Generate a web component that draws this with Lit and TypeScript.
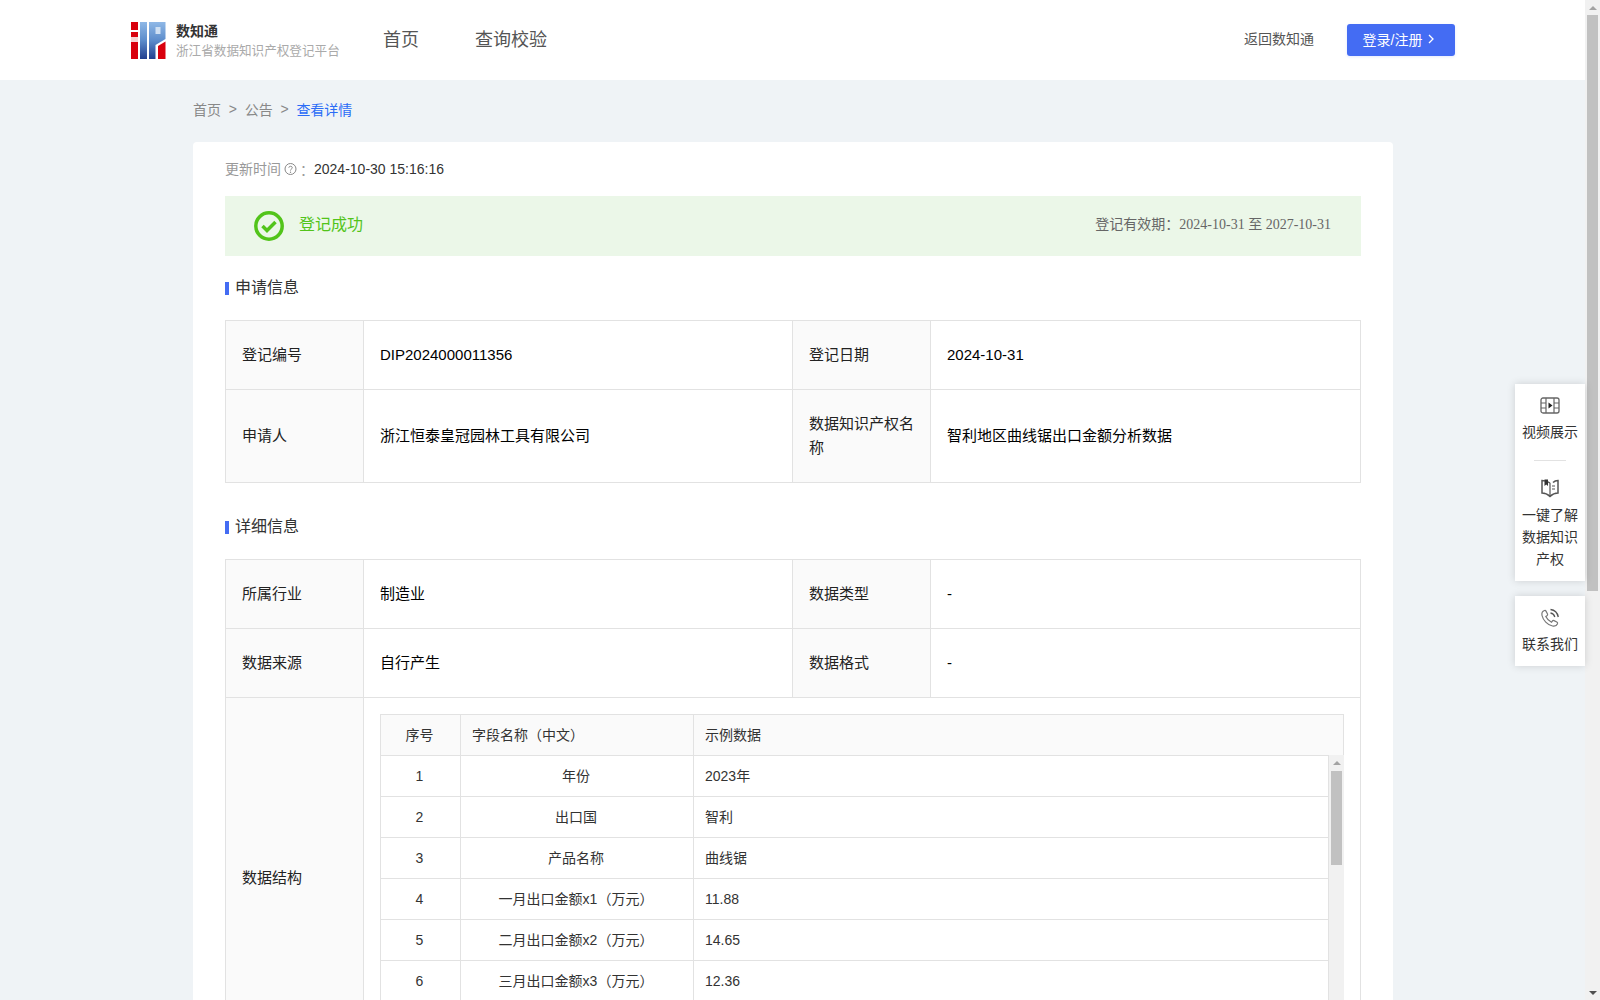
import { LitElement, html, css, svg } from 'lit';
import { customElement } from 'lit/decorators.js';

const basicRows = [
  ['1', '年份', '2023年'],
  ['2', '出口国', '智利'],
  ['3', '产品名称', '曲线锯'],
  ['4', '一月出口金额x1（万元）', '11.88'],
  ['5', '二月出口金额x2（万元）', '14.65'],
  ['6', '三月出口金额x3（万元）', '12.36'],
];

const logo = html`<svg class="logo" width="35" height="37" viewBox="0 0 35 37">
  <defs>
    <linearGradient id="lb" x1="0" y1="0" x2="0" y2="1">
      <stop offset="0" stop-color="#8fb8e6" />
      <stop offset="0.5" stop-color="#5c8ccb" />
      <stop offset="1" stop-color="#223f8f" />
    </linearGradient>
  </defs>
  <rect x="0" y="0" width="7" height="8" fill="#d9000d" />
  <rect x="0" y="10" width="7" height="5" fill="#d9000d" />
  <rect x="0" y="15" width="7" height="5" fill="#f6d5d5" />
  <rect x="0" y="20" width="7" height="17" fill="#d9000d" />
  <rect x="9" y="0" width="7" height="37" fill="url(#lb)" />
  <path d="M18 0H34.500V17L24.500 23V37H18Z" fill="url(#lb)" />
  <rect x="24.500" y="5" width="5" height="7" fill="#cfe0f3" />
  <path d="M27 24L34.500 19.500V37H27Z" fill="#d9000d" />
</svg>`;

const filmIcon = svg`<rect x="1" y="2" width="18" height="15" rx="2" fill="none" stroke="#666" stroke-width="1.300" />
  <path d="M6 2V17M14 2V17M1 7H6M1 12H6M14 7H19M14 12H19" fill="none" stroke="#666" stroke-width="1.200" />
  <path d="M8.500 6.500L12.500 9.500L8.500 12.500Z" fill="#222" />`;

const bookIcon = svg`<path d="M10 5C8 3.500 5 2.500 2 2.500V15C5 15 8 16.500 10 18.500C12 16.500 15 15 18 15V2.500C15.500 2.500 14 3.500 13 4.500" fill="none" stroke="#555" stroke-width="1.500" />
  <path d="M4.500 1.500H8V8L6.200 6.500L4.500 8Z" fill="#333" />
  <path d="M10 5V18.500M12 8H15M12 11H15" fill="none" stroke="#555" stroke-width="1.200" />`;

const phoneIcon = svg`<path d="M4.500 2.500C2.500 3.200 1.500 5 2 7.500C3 12 7.500 17 12.500 18C15 18.500 16.800 17.500 17.500 15.800C17.800 15 17.500 14.400 16.800 14L14 12.600C13.300 12.300 12.700 12.500 12.300 13.100L11.500 14.300C9 13 7 11 5.800 8.500L7 7.700C7.600 7.300 7.800 6.700 7.500 6L6 3.100C5.700 2.500 5.100 2.300 4.500 2.500Z" fill="none" stroke="#777" stroke-width="1.200" />
  <path d="M10.500 1.500C14.500 2 17.500 5 18.300 9M10.500 5C12.500 5.300 14.300 7 14.800 9" fill="none" stroke="#555" stroke-width="1.300" />`;

@customElement('app-root')
export class AppRoot extends LitElement {
  static styles = css`
    :host {
      display: flex;
      position: relative;
      height: 1000px;
      overflow: hidden;
      background: #eff3f6;
      font-family: 'Liberation Sans', 'Noto Sans CJK SC', sans-serif;
      font-size: 14px;
      color: #333;
    }

    .page {
      flex: 1;
      min-width: 0;
    }

    /* page scrollbar */
    .bar {
      width: 15px;
      flex: none;
      background: #f1f1f1;
      display: flex;
      flex-direction: column;
      align-items: center;
      position: relative;
    }
    .bar .arrow-box {
      height: 15px;
      flex: none;
      display: flex;
      align-items: center;
      justify-content: center;
    }
    .bar .thumb {
      width: 11px;
      height: 576px;
      background: #c1c1c1;
    }
    .bar .spacer {
      flex: 1;
    }
    .up {
      width: 0;
      height: 0;
      border-left: 4px solid transparent;
      border-right: 4px solid transparent;
      border-bottom: 4px solid #a3a3a3;
    }
    .down {
      width: 0;
      height: 0;
      border-left: 4px solid transparent;
      border-right: 4px solid transparent;
      border-top: 4px solid #505050;
    }

    header {
      height: 80px;
      background: #fff;
      display: flex;
      align-items: center;
      padding: 0 130px 0 131px;
    }
    .logo {
      display: block;
      margin-right: 10px;
    }
    .brand {
      width: 168px;
      margin-right: 39px;
    }
    .brand .name {
      font-size: 14px;
      font-weight: 700;
      line-height: 20px;
      color: #333;
    }
    .brand .sub {
      font-size: 12.600px;
      line-height: 18px;
      margin-top: 1px;
      color: #aaa;
      white-space: nowrap;
    }
    nav {
      display: flex;
      gap: 56px;
      font-size: 18px;
      color: #555;
      padding-bottom: 4px;
    }
    .head-right {
      margin-left: auto;
      display: flex;
      align-items: center;
      gap: 33px;
      color: #555;
    }
    .head-right .back {
      padding-bottom: 4px;
    }
    .login {
      width: 108px;
      height: 32px;
      box-sizing: border-box;
      padding: 0 4px 3px 0;
      background: #446cf3;
      color: #fff;
      border-radius: 3px;
      display: flex;
      align-items: center;
      justify-content: center;
      gap: 5px;
      box-shadow: 0 1px 3px rgba(68, 108, 243, 0.15);
    }

    .content {
      width: 1200px;
      margin-left: 193px;
    }
    .crumbs {
      height: 62px;
      box-sizing: border-box;
      padding-bottom: 5px;
      display: flex;
      align-items: center;
      color: #888;
      gap: 7.750px;
    }
    .crumbs .cur {
      color: #2b6cf6;
    }

    .card {
      background: #fff;
      border-radius: 4px 4px 0 0;
      padding: 0 32px 40px;
      box-sizing: border-box;
    }
    .updated {
      height: 54px;
      display: flex;
      align-items: center;
      color: #999;
    }
    .updated .key {
      padding-bottom: 2px;
    }
    .updated .time {
      color: #333;
    }
    .updated svg {
      margin: 0 2px 0 2px;
    }

    .alert {
      height: 60px;
      background: #ebf7e8;
      display: flex;
      align-items: center;
      padding: 0 30px 0 29px;
    }
    .alert .ok {
      font-size: 16px;
      color: #52c41a;
      margin-left: 15px;
      padding-bottom: 6px;
    }
    .alert .valid {
      margin-left: auto;
      color: #666;
      padding-bottom: 6px;
    }
    .alert .valid .date {
      font-family: 'Liberation Serif', 'Noto Sans CJK SC', serif;
    }

    .section {
      display: flex;
      align-items: center;
      gap: 6px;
      height: 20px;
      padding-bottom: 2px;
      font-size: 16px;
      color: #333;
      margin: 20px 0 22px;
    }
    .section::before {
      content: '';
      width: 4px;
      height: 13px;
      background: #446cf3;
      margin-top: 4px;
    }
    .section.second {
      margin-top: 32px;
    }

    table {
      border-collapse: collapse;
      table-layout: fixed;
      width: 100%;
    }
    .info > tr > td,
    .info > tbody > tr > td {
      border: 1px solid #e2e2e2;
      padding: 0 15px 0 16px;
      height: 68px;
      font-size: 15px;
      color: #000;
      line-height: 24px;
    }
    .info td.label {
      background: #fafafa;
      color: #222;
    }
    .info tr.tall > td {
      height: 92px;
    }
    .info td.nested {
      padding: 16px 16px 16px;
      vertical-align: top;
    }

    .grid-head td,
    .grid-body td {
      border: 1px solid #e2e2e2;
      height: 39px;
      padding: 0 13px 1px 11px;
      font-size: 14px;
      color: #333;
      line-height: 20px;
    }
    .grid-head td {
      background: #fafafa;
    }
    .grid-head td.c,
    .grid-body td.c {
      text-align: center;
    }
    .grid-head table,
    .grid-body table {
      width: 100%;
    }
    .grid-wrap {
      display: flex;
      align-items: flex-start;
      height: 287px;
      overflow: hidden;
    }
    .grid-body {
      flex: 1;
      min-width: 0;
    }
    .grid-head {
      margin-bottom: -1px;
    }
    .inner-bar {
      width: 15px;
      height: 287px;
      flex: none;
      background: #f1f1f1;
      display: flex;
      flex-direction: column;
      align-items: center;
    }
    .inner-bar .arrow-box {
      height: 16px;
      flex: none;
      display: flex;
      align-items: center;
      justify-content: center;
    }
    .inner-bar .thumb {
      width: 11px;
      height: 94px;
      background: #c1c1c1;
    }

    .tools {
      position: absolute;
      right: 15px;
      top: 384px;
      width: 70px;
      display: flex;
      flex-direction: column;
      gap: 15px;
    }
    .tool-card {
      background: #fff;
      box-shadow: 0 0 8px rgba(0, 0, 0, 0.15);
      text-align: center;
      color: #333;
      line-height: 22px;
      padding: 12px 0 11px;
    }
    .tool-card svg {
      display: block;
      margin: 0 auto 5px;
    }
    .tool-card svg.book {
      margin-bottom: 6px;
    }
    .tool-card .divider {
      width: 32px;
      height: 1px;
      background: #e2e2e2;
      margin: 17px auto 17px;
    }
    .tool-card .txt {
      padding: 0 5px;
    }
  `;

  render() {
    return html`
      <div class="page">
        <header>
          ${logo}
          <div class="brand">
            <div class="name">数知通</div>
            <div class="sub">浙江省数据知识产权登记平台</div>
          </div>
          <nav><span>首页</span><span>查询校验</span></nav>
          <div class="head-right">
            <span class="back">返回数知通</span>
            <div class="login">
              登录/注册
              <svg width="8" height="12" viewBox="0 0 8 12">
                <path d="M2 2L6 6L2 10" fill="none" stroke="#fff" stroke-width="1.300" />
              </svg>
            </div>
          </div>
        </header>

        <div class="content">
          <div class="crumbs">
            <span>首页</span><span>&gt;</span><span>公告</span><span>&gt;</span>
            <span class="cur">查看详情</span>
          </div>

          <div class="card">
            <div class="updated">
              <span class="key">更新时间</span>
              <svg width="15" height="14" viewBox="0 0 14 14">
                <circle cx="7" cy="7" r="5.500" fill="none" stroke="#888" />
                <path d="M5.300 5.700C5.300 3.800 8.800 3.800 8.800 5.700C8.800 7 7 7 7 8.500" fill="none" stroke="#888" />
                <circle cx="7" cy="10.200" r="0.700" fill="#888" />
              </svg>
              ：<span class="time">2024-10-30 15:16:16</span>
            </div>

            <div class="alert">
              <svg width="30" height="30" viewBox="0 0 30 30">
                <circle cx="15" cy="15" r="13.200" fill="none" stroke="#52c41a" stroke-width="3.500" />
                <path d="M8.500 15L13 19.500L21.500 11" fill="none" stroke="#52c41a" stroke-width="3.500" />
              </svg>
              <span class="ok">登记成功</span>
              <span class="valid">登记有效期：<span class="date">2024-10-31 至 2027-10-31</span></span>
            </div>

            <div class="section">申请信息</div>
            <table class="info">
              <colgroup>
                <col style="width:138px" /><col style="width:429px" /><col style="width:138px" /><col />
              </colgroup>
              <tr>
                <td class="label">登记编号</td>
                <td>DIP2024000011356</td>
                <td class="label">登记日期</td>
                <td>2024-10-31</td>
              </tr>
              <tr class="tall">
                <td class="label">申请人</td>
                <td>浙江恒泰皇冠园林工具有限公司</td>
                <td class="label">数据知识产权名称</td>
                <td>智利地区曲线锯出口金额分析数据</td>
              </tr>
            </table>

            <div class="section second">详细信息</div>
            <table class="info">
              <colgroup>
                <col style="width:138px" /><col style="width:429px" /><col style="width:138px" /><col />
              </colgroup>
              <tr>
                <td class="label">所属行业</td>
                <td>制造业</td>
                <td class="label">数据类型</td>
                <td>-</td>
              </tr>
              <tr>
                <td class="label">数据来源</td>
                <td>自行产生</td>
                <td class="label">数据格式</td>
                <td>-</td>
              </tr>
              <tr>
                <td class="label">数据结构</td>
                <td class="nested" colspan="3">
                  <div class="grid-head">
                    <table>
                      <colgroup><col style="width:80px" /><col style="width:233px" /><col /></colgroup>
                      <tr>
                        <td class="c">序号</td>
                        <td>字段名称（中文）</td>
                        <td>示例数据</td>
                      </tr>
                    </table>
                  </div>
                  <div class="grid-wrap">
                    <div class="grid-body">
                      <table>
                        <colgroup><col style="width:80px" /><col style="width:233px" /><col /></colgroup>
                        ${basicRows.map(
                          ([n, name, val]) => html`<tr>
                            <td class="c">${n}</td>
                            <td class="c">${name}</td>
                            <td>${val}</td>
                          </tr>`,
                        )}
                      </table>
                    </div>
                    <div class="inner-bar">
                      <div class="arrow-box"><div class="up"></div></div>
                      <div class="thumb"></div>
                    </div>
                  </div>
                </td>
              </tr>
            </table>
          </div>
        </div>
      </div>

      <div class="bar">
        <div class="arrow-box"><div class="up"></div></div>
        <div class="thumb"></div>
        <div class="spacer"></div>
        <div class="arrow-box"><div class="down"></div></div>
      </div>

      <div class="tools">
        <div class="tool-card">
          <svg width="20" height="20" viewBox="0 0 20 20">${filmIcon}</svg>
          <div class="txt">视频展示</div>
          <div class="divider"></div>
          <svg class="book" width="20" height="20" viewBox="0 0 20 20">${bookIcon}</svg>
          <div class="txt">一键了解数据知识产权</div>
        </div>
        <div class="tool-card">
          <svg width="20" height="20" viewBox="0 0 20 20">${phoneIcon}</svg>
          <div class="txt">联系我们</div>
        </div>
      </div>
    `;
  }
}
